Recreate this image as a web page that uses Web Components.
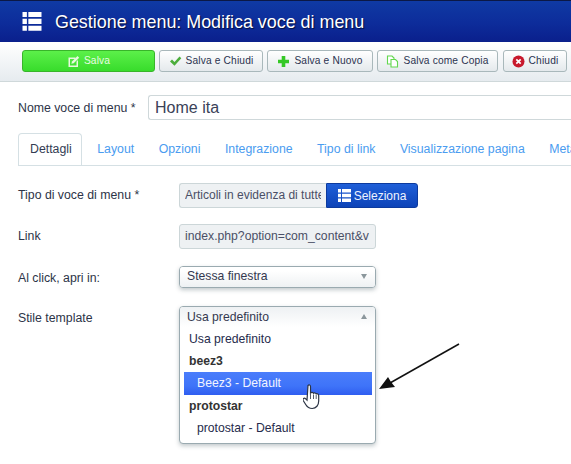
<!DOCTYPE html>
<html lang="it">
<head>
<meta charset="utf-8">
<title>Gestione menu</title>
<style>
  html, body { margin: 0; height: 464px; overflow: hidden; background: #fff; }
  body { font: 12px/18px "Liberation Sans", Arial, sans-serif; color: #333; }
</style>
</head>
<body>
<app-header>Gestione menu: Modifica voce di menu</app-header>
<app-toolbar>
  <tool-button variant="success" icon="edit" style="width:133px">Salva</tool-button>
  <tool-button icon="check" style="width:104px">Salva e Chiudi</tool-button>
  <tool-button icon="plus" style="width:106px">Salva e Nuovo</tool-button>
  <tool-button icon="copy" style="width:121px;margin-right:1px">Salva come Copia</tool-button>
  <tool-button icon="close" style="width:64px">Chiudi</tool-button>
</app-toolbar>
<item-form></item-form>

<script>
const ICONS = {
  edit: `<svg width="13" height="13" viewBox="0 0 13 13"><path d="M1.5 2.5h7v1.5h-5.500v6.500h6.500v-4l1.500-1.500v7h-9.500z" fill="#e8f8e0"/><path d="M5 6.500l5.500-5.500 1.700 1.700-5.500 5.500-2.300.6z" fill="#e8f8e0"/></svg>`,
  check: `<svg width="13" height="12" viewBox="0 0 13 12"><path d="M1 6.500l2-2 2.500 2.500 5-5.500 1.800 1.800-6.800 7.500z" fill="#4cae3c"/></svg>`,
  plus: `<svg width="13" height="13" viewBox="0 0 13 13"><path d="M4.700 1h3.600v3.700h3.700v3.600h-3.700v3.700h-3.600v-3.700h-3.700v-3.600h3.700z" fill="#35c826"/></svg>`,
  copy: `<svg width="13" height="13" viewBox="0 0 13 13" fill="#fff" stroke="#62d84e" stroke-width="1.100"><path d="M1.500 1h4.500l2 2v6h-6.500z"/><path d="M5 4.500h4.500l2 2v5.500h-6.500z"/></svg>`,
  close: `<svg width="13" height="13" viewBox="0 0 13 13"><circle cx="6.500" cy="6.500" r="6" fill="#c8192c"/><path d="M4.300 4.300l4.400 4.400M8.700 4.300l-4.400 4.400" stroke="#fff" stroke-width="1.700"/></svg>`,
  grid: `<svg width="13" height="13" viewBox="0 0 13 13" fill="#fff"><path d="M0 0h3v3.500h-3zM4 0h9v3.500h-9zM0 4.700h3v3.500h-3zM4 4.700h9v3.500h-9zM0 9.400h3v3.500h-3zM4 9.400h9v3.500h-9z"/></svg>`
};

class AppHeader extends HTMLElement {
  constructor() {
    super();
    this.attachShadow({ mode: "open" }).innerHTML = `
      <style>
        :host {
          display: flex; align-items: center; gap: 13px;
          box-sizing: border-box; height: 42px; padding: 0 0 0 22px;
          background: linear-gradient(#0f3aa4, #0d2c9a 55%, #0a1f8c);
          border-top: 1px solid #0b1846;
          color: #fff; font-size: 17.900px; font-weight: 400;
          text-shadow: 1px 1px 1px #04103f;
        }
        svg { width: 20px; height: 19px; }
      </style>
      <svg viewBox="0 0 13 13" fill="#fff"><path d="M0 0h3v3.500h-3zM4 0h9v3.500h-9zM0 4.700h3v3.500h-3zM4 4.700h9v3.500h-9zM0 9.400h3v3.500h-3zM4 9.400h9v3.500h-9z"/></svg>
      <span><slot></slot></span>`;
  }
}

class AppToolbar extends HTMLElement {
  constructor() {
    super();
    this.attachShadow({ mode: "open" }).innerHTML = `
      <style>
        :host {
          display: flex; gap: 4px; box-sizing: border-box;
          height: 40px; padding: 8px 0 0 22px;
          background: linear-gradient(#fff, #e6ebef);
          border-bottom: 1px solid #cfd8da;
        }
      </style>
      <slot></slot>`;
  }
}

class ToolButton extends HTMLElement {
  constructor() {
    super();
    const icon = ICONS[this.getAttribute("icon")] ?? "";
    this.attachShadow({ mode: "open" }).innerHTML = `
      <style>
        :host {
          display: flex; align-items: center; justify-content: center; gap: 4px;
          flex: none; box-sizing: border-box; height: 22px;
          border: 1px solid #a9b8bb; border-radius: 3px;
          background: linear-gradient(#fff, #e4e9ec);
          color: #2b3350; font-size: 10.200px; letter-spacing: .15px;
        }
        :host([variant="success"]) {
          border-color: #38b52a;
          background: linear-gradient(#5cf04a, #38dc2c);
          color: #e9fbe3;
        }
        svg { display: block; }
      </style>
      ${icon}<span><slot></slot></span>`;
  }
}

class TabBar extends HTMLElement {
  constructor() {
    super();
    const tabs = ["Dettagli", "Layout", "Opzioni", "Integrazione", "Tipo di link", "Visualizzazione pagina", "Metadati"];
    this.attachShadow({ mode: "open" }).innerHTML = `
      <style>
        :host {
          display: flex; box-sizing: border-box; height: 33px;
          border-bottom: 1px solid #d5e0e4; white-space: nowrap; overflow: hidden;
        }
        a {
          flex: none; box-sizing: border-box; height: 33px; margin-right: 2px; padding: 7px 11.250px 0;
          color: #4a9cf0; font-size: 12.300px;
        }
        a.active {
          width: 64px; margin-right: 4px; padding-left: 11px; color: #333c52; background: #fff;
          border: 1px solid #d5e0e4; border-bottom-color: #fff;
          border-radius: 4px 4px 0 0; padding-top: 6px;
        }
      </style>
      ${tabs.map((t, i) => `<a class="${i ? "" : "active"}">${t}</a>`).join("")}`;
  }
}

class FormRow extends HTMLElement {
  constructor() {
    super();
    this.attachShadow({ mode: "open" }).innerHTML = `
      <style>
        :host { display: grid; grid-template-columns: 161px 1fr; align-items: start; }
        .label { color: #2d3448; font-size: 12.300px; line-height: 25px; }
      </style>
      <div class="label">${this.getAttribute("label")}</div>
      <div><slot></slot></div>`;
  }
}

class ReadonlyField extends HTMLElement {
  constructor() {
    super();
    this.attachShadow({ mode: "open" }).innerHTML = `
      <style>
        :host {
          display: block; box-sizing: border-box; height: 25px; padding: 0 5px;
          background: #eef1f3; border: 1px solid #ccd6d8; border-radius: 3px;
          color: #4a4f66; font-size: 12.200px; line-height: 23px;
        }
        div { white-space: nowrap; overflow: hidden; }
      </style>
      <div><slot></slot></div>`;
  }
}

class SelectBox extends HTMLElement {
  constructor() {
    super();
    const open = this.hasAttribute("open");
    this.attachShadow({ mode: "open" }).innerHTML = `
      <style>
        :host {
          display: block; box-sizing: border-box; width: 197px;
          background: #fff; border: 1px solid #9aaab0; border-radius: 4px;
          box-shadow: 0 2px 4px rgba(120,135,140,.45);
          color: #34384f; font-size: 12.200px;
        }
        .head {
          position: relative; box-sizing: border-box; height: 20px; padding: 0 7px;
          line-height: 18px; border-radius: 3px;
          background: linear-gradient(#fff 20%, #eef1f3);
        }
        :host([open]) .head { line-height: 20px; background: linear-gradient(#eef1f3, #fff); }
        .arrow {
          position: absolute; right: 8px; top: 7px; width: 0; height: 0;
          border-left: 3.500px solid transparent; border-right: 3.500px solid transparent;
          border-top: 5px solid #8b979c;
        }
        :host([open]) .arrow { border-top: 0; border-bottom: 5px solid #8b979c; }
        .list { padding: 1px 3px 4px 4px; }
      </style>
      <div class="head">${this.getAttribute("value")}<span class="arrow"></span></div>
      ${open ? `<div class="list"><slot></slot></div>` : ""}`;
  }
}

class SelectOption extends HTMLElement {
  constructor() {
    super();
    this.attachShadow({ mode: "open" }).innerHTML = `
      <style>
        :host {
          display: block; box-sizing: border-box; height: 22px; padding-left: 5px;
          line-height: 22px; color: #262b4c; white-space: nowrap;
        }
        :host([group]) { font-weight: 700; color: #333; }
        :host([nested]) { padding-left: 13px; }
        :host([selected]) {
          height: 23px;
          background: linear-gradient(#4a7dfb, #3f74f9 60%, #2f5df0);
          color: #f2f5ff;
        }
      </style>
      <slot></slot>`;
  }
}

class ItemForm extends HTMLElement {
  constructor() {
    super();
    this.attachShadow({ mode: "open" }).innerHTML = `
      <style>
        :host { display: block; position: relative; padding: 13px 0 0 18px; }
        .name { display: flex; align-items: center; gap: 6px; color: #2d3448; font-size: 12.300px; }
        .name input {
          flex: 1; min-width: 0; box-sizing: border-box; height: 25px; padding: 0 6px;
          border: 1px solid #cfd8da; border-right: 0; border-radius: 3px 0 0 3px;
          font: 16px "Liberation Sans", Arial, sans-serif; color: #3a4258; outline: 0;
        }
        tab-bar { margin-top: 13px; }
        .rows { display: flex; flex-direction: column; padding-top: 17px; }
        .type { display: flex; width: 239px; }
        .type readonly-field { width: 147px; font-size: 12px; border-radius: 3px 0 0 3px; border-right: 0; }
        .pick {
          flex: none; display: flex; align-items: center; justify-content: center; gap: 3px;
          width: 92px; height: 25px; box-sizing: border-box;
          background: linear-gradient(#1f5fd8, #0d43b8); border: 1px solid #0c3a9e;
          border-radius: 0 3px 3px 0; color: #eef3ff; font-size: 12px;
        }
        .link { width: 197px; }
        form-row:nth-child(2) { margin-top: 16px; }
        form-row:nth-child(3) { margin-top: 17px; }
        form-row:nth-child(4) { margin-top: 15px; }
        form-row.short { line-height: 22px; }
        .hand { position: absolute; left: 303px; top: 302px; }
        .pointer { position: absolute; left: 378px; top: 260px; }
      </style>
      <div class="name"><span style="width:124px">Nome voce di menu *</span><input value="Home ita"></div>
      <tab-bar></tab-bar>
      <div class="rows">
        <form-row label="Tipo di voce di menu *">
          <div class="type">
            <readonly-field>Articoli in evidenza di tutte</readonly-field>
            <div class="pick">${ICONS.grid}<span>Seleziona</span></div>
          </div>
        </form-row>
        <form-row label="Link"><readonly-field class="link">index.php?option=com_content&amp;v</readonly-field></form-row>
        <form-row label="Al click, apri in:" class="short"><select-box value="Stessa finestra"></select-box></form-row>
        <form-row label="Stile template" class="short">
          <select-box value="Usa predefinito" open>
            <select-option>Usa predefinito</select-option>
            <select-option group>beez3</select-option>
            <select-option nested selected>Beez3 - Default</select-option>
            <select-option group>protostar</select-option>
            <select-option nested>protostar - Default</select-option>
          </select-box>
        </form-row>
      </div>
      <svg class="pointer" width="84" height="56" viewBox="0 0 84 56">
        <path d="M81 2L12 41" stroke="#111" stroke-width="1.500" fill="none"/>
        <path d="M1 47L10 35 13 40 17 45z" fill="#111"/>
      </svg>
      <svg class="hand" width="18" height="26" viewBox="0 0 18 26">
        <path d="M5 1.500c1-1 2.400-.5 2.500 1v6.500c1-1 2.500-.8 3 .3 1-.7 2.300-.4 2.700.6 1-.5 2.500 0 2.500 1.600v5.500c0 4-2.500 7.500-6.500 7.500-3 0-5-1.500-6.500-4l-2.500-4c-.8-1.500 1-3 2.300-1.800l1.500 1.500z" fill="#fff" stroke="#2c3444" stroke-width="1.200"/>
        <path d="M7.500 10v5M10.500 10.500v4.500M13.200 11v4" stroke="#2c3444" stroke-width=".8"/>
      </svg>`;
  }
}

customElements.define("app-header", AppHeader);
customElements.define("tool-button", ToolButton);
customElements.define("app-toolbar", AppToolbar);
customElements.define("tab-bar", TabBar);
customElements.define("form-row", FormRow);
customElements.define("readonly-field", ReadonlyField);
customElements.define("select-box", SelectBox);
customElements.define("select-option", SelectOption);
customElements.define("item-form", ItemForm);
</script>
</body>
</html>
